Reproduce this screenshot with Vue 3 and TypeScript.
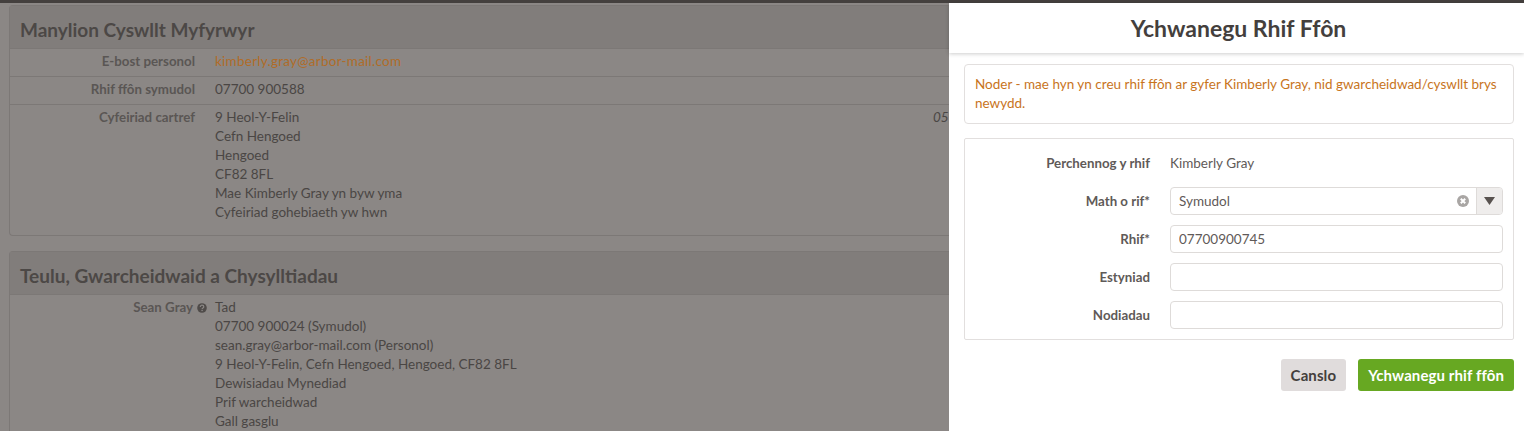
<script setup lang="ts">
const address = ['9 Heol-Y-Felin', 'Cefn Hengoed', 'Hengoed', 'CF82 8FL', 'Mae Kimberly Gray yn byw yma', 'Cyfeiriad gohebiaeth yw hwn']
const guardian = [
  'Tad',
  '07700 900024 (Symudol)',
  'sean.gray@arbor-mail.com (Personol)',
  '9 Heol-Y-Felin, Cefn Hengoed, Hengoed, CF82 8FL',
  'Dewisiadau Mynediad',
  'Prif warcheidwad',
  'Gall gasglu',
]
</script>

<template>
  <div class="screen">
    <div class="topbar"></div>
    <div class="content">
      <main class="page">
        <section class="card">
          <h2 class="card-title">Manylion Cyswllt Myfyrwyr</h2>
          <div class="row">
            <div class="label">E-bost personol</div>
            <div class="value link">kimberly.gray@arbor-mail.com</div>
          </div>
          <div class="row">
            <div class="label">Rhif ffôn symudol</div>
            <div class="value">07700 900588</div>
          </div>
          <div class="row last">
            <div class="label">Cyfeiriad cartref</div>
            <div class="value grow">
              <div v-for="line in address" :key="line">{{ line }}</div>
            </div>
            <div class="date">05</div>
          </div>
        </section>

        <section class="card">
          <h2 class="card-title">Teulu, Gwarcheidwaid a Chysylltiadau</h2>
          <div class="row last">
            <div class="label">
              Sean Gray
              <svg class="help" viewBox="0 0 10 10" width="10" height="10">
                <circle cx="5" cy="5" r="4.8" fill="#4f4b49" />
                <path d="M3.3 3.9C3.3 2.8 4.1 2.2 5 2.2s1.8.6 1.8 1.6C6.8 5 5.1 4.9 5.1 6.1" fill="none" stroke="#8b8785" stroke-width="1.2" />
                <rect x="4.4" y="6.8" width="1.4" height="1.3" fill="#8b8785" />
              </svg>
            </div>
            <div class="value">
              <div v-for="line in guardian" :key="line">{{ line }}</div>
            </div>
          </div>
        </section>
      </main>

      <aside class="drawer">
        <header class="drawer-head">Ychwanegu Rhif Ffôn</header>
        <div class="drawer-body">
          <div class="notice">Noder - mae hyn yn creu rhif ffôn ar gyfer Kimberly Gray, nid gwarcheidwad/cyswllt brys newydd.</div>
          <form class="form" @submit.prevent>
            <div class="field">
              <div class="field-label">Perchennog y rhif</div>
              <div class="field-text">Kimberly Gray</div>
            </div>
            <div class="field">
              <div class="field-label">Math o rif*</div>
              <div class="select">
                <span class="select-text">Symudol</span>
                <svg class="clear" viewBox="0 0 12 12" width="12" height="12">
                  <circle cx="6" cy="6" r="6" fill="#a9a6a4" />
                  <path d="M3.8 3.8l4.4 4.4M8.2 3.8l-4.4 4.4" stroke="#fff" stroke-width="2" />
                </svg>
                <span class="select-arrow">
                  <svg viewBox="0 0 11 8" width="11" height="8"><path d="M0 0h11L5.5 8z" fill="#58524f" /></svg>
                </span>
              </div>
            </div>
            <div class="field">
              <div class="field-label">Rhif*</div>
              <input class="input" value="07700900745" />
            </div>
            <div class="field">
              <div class="field-label">Estyniad</div>
              <input class="input" />
            </div>
            <div class="field">
              <div class="field-label">Nodiadau</div>
              <input class="input" />
            </div>
          </form>
          <div class="actions">
            <button class="btn btn-cancel" type="button">Canslo</button>
            <button class="btn btn-save" type="button">Ychwanegu rhif ffôn</button>
          </div>
        </div>
      </aside>
    </div>
  </div>
</template>

<style>
html, body {
  margin: 0;
  overflow: hidden;
}
</style>

<style scoped>
.screen {
  height: 431px;
  overflow: hidden;
  display: flex;
  flex-direction: column;
  background: #8b8785;
  font-family: Lato, "Liberation Sans", sans-serif;
  font-size: 13.5px;
  color: #4a4644;
}

.topbar {
  flex: none;
  height: 3px;
  background: #44403e;
}

.content {
  flex: 1;
  min-height: 0;
  display: flex;
}

/* the page behind the drawer, colours already dimmed by the modal mask */
.page {
  flex: 1;
  min-width: 0;
  padding: 2px 0 0 9px;
}

.card {
  background: #8b8785;
  border: 1px solid #7c7876;
  border-right: 0;
  border-radius: 4px 0 0 4px;
  margin-bottom: 15px;
}

.card-title {
  margin: 0;
  height: 42px;
  padding: 0 10px;
  background: #817d7b;
  border-bottom: 1px solid #7c7876;
  font-size: 19px;
  line-height: 48px;
  font-weight: 700;
  color: #4c4846;
}

.row {
  display: flex;
  padding: 3px 0 5px;
  border-bottom: 1px solid #7c7876;
  line-height: 19px;
}

.row.last {
  border-bottom: 0;
  padding-bottom: 13px;
}

.label {
  width: 185px;
  margin-right: 20px;
  text-align: right;
  font-weight: 700;
  font-size: 13.3px;
  color: #5a5654;
  flex: none;
}

.grow {
  flex: 1;
}

.link {
  color: #b06c28;
  letter-spacing: 0.25px;
}

.date {
  width: 16px;
  font-style: italic;
}

.help {
  vertical-align: -1px;
  margin-left: 1px;
  margin-right: -12px;
}

.drawer {
  flex: none;
  width: 575px;
  background: #fff;
}

.drawer-head {
  height: 50px;
  padding-left: 4px;
  line-height: 50px;
  text-align: center;
  font-size: 23px;
  font-weight: 700;
  color: #443f3d;
  box-shadow: 0 1px 4px rgba(0, 0, 0, 0.2);
}

.drawer-body {
  padding: 11px 10px 0 15px;
}

.notice {
  height: 60px;
  box-sizing: border-box;
  padding: 10px;
  border: 1px solid #e2dfde;
  border-radius: 4px;
  color: #c8741c;
  line-height: 19px;
}

.form {
  margin-top: 14px;
  padding: 10px;
  border: 1px solid #e2dfde;
  border-radius: 2px;
  display: flex;
  flex-direction: column;
  gap: 10px;
}

.field {
  display: flex;
  align-items: center;
  height: 28px;
}

.field-label {
  width: 175px;
  margin-right: 20px;
  text-align: right;
  font-weight: 700;
  font-size: 13.3px;
  color: #5f5a58;
  flex: none;
}

.field-text {
  color: #5f5a58;
}

.select {
  flex: 1;
  height: 28px;
  box-sizing: border-box;
  display: flex;
  align-items: center;
  border: 1px solid #dedbd9;
  border-radius: 4px;
  overflow: hidden;
  color: #5f5a58;
}

.select-text {
  flex: 1;
  padding-left: 8px;
}

.clear {
  margin-right: 7px;
}

.select-arrow {
  width: 25px;
  height: 100%;
  display: flex;
  align-items: center;
  justify-content: center;
  background: #efedec;
  border-left: 1px solid #dedbd9;
}

.input {
  flex: 1;
  min-width: 0;
  height: 28px;
  box-sizing: border-box;
  padding: 0 8px;
  border: 1px solid #dedbd9;
  border-radius: 4px;
  font: inherit;
  color: #5f5a58;
  outline: none;
}

.actions {
  display: flex;
  justify-content: flex-end;
  gap: 12px;
  margin-top: 19px;
}

.btn {
  height: 32px;
  border: 0;
  border-radius: 3px;
  padding: 0 10px;
  font-family: inherit;
  font-size: 15px;
  font-weight: 700;
  letter-spacing: 0.1px;
}

.btn-cancel {
  background: #e0dcdc;
  color: #443f3d;
}

.btn-save {
  background: #67a822;
  color: #fff;
}
</style>
